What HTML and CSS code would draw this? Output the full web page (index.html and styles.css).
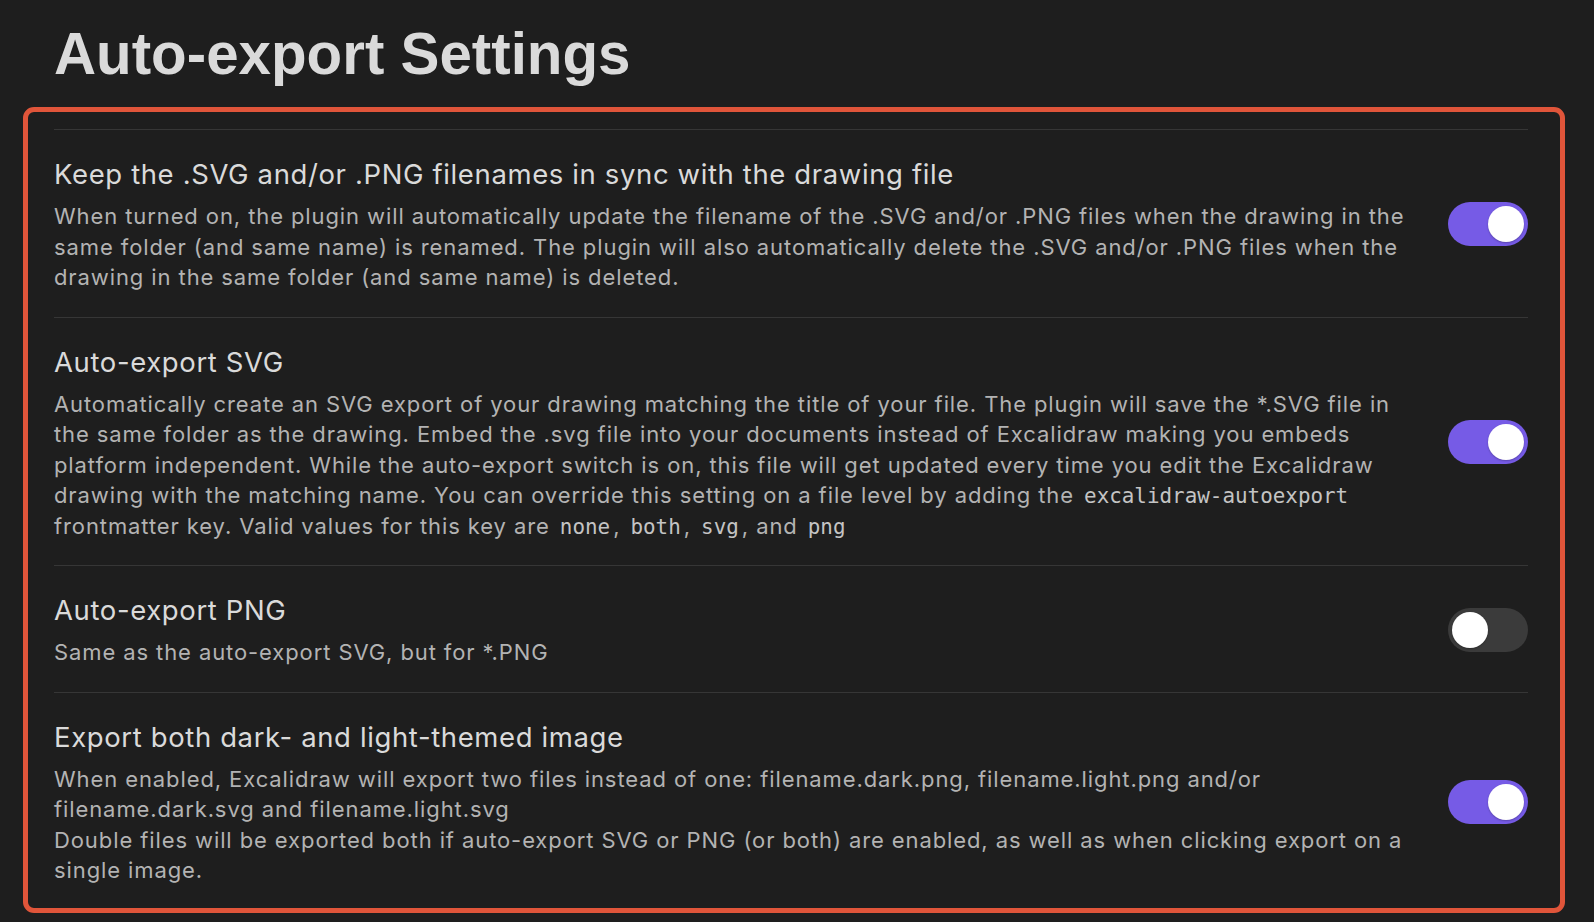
FILE: index.html
```html
<!DOCTYPE html>
<html lang="en">
<head>
<meta charset="utf-8">
<title>Auto-export Settings</title>
<link rel="stylesheet" href="styles.css">
</head>
<body>
<main class="page">
  <h1 class="page-title">Auto-export Settings</h1>
  <section class="settings">
    <div class="setting-item">
      <div class="setting-info">
        <div class="setting-name">Keep the .SVG and/or .PNG filenames in sync with the drawing file</div>
        <div class="setting-desc">When turned on, the plugin will automatically update the filename of the .SVG and/or .PNG files when the drawing in the same folder (and same name) is renamed. The plugin will also automatically delete the .SVG and/or .PNG files when the drawing in the same folder (and same name) is deleted.</div>
      </div>
      <div class="setting-control"><div class="toggle is-on"><span class="knob"></span></div></div>
    </div>
    <div class="setting-item">
      <div class="setting-info">
        <div class="setting-name">Auto-export SVG</div>
        <div class="setting-desc">Automatically create an SVG export of your drawing matching the title of your file. The plugin will save the *.SVG file in the same folder as the drawing. Embed the .svg file into your documents instead of Excalidraw making you embeds platform independent. While the auto-export switch is on, this file will get updated every time you edit the Excalidraw drawing with the matching name. You can override this setting on a file level by adding the <code>excalidraw-autoexport</code> frontmatter key. Valid values for this key are <code>none</code>, <code>both</code>, <code>svg</code>, and <code>png</code></div>
      </div>
      <div class="setting-control"><div class="toggle is-on"><span class="knob"></span></div></div>
    </div>
    <div class="setting-item">
      <div class="setting-info">
        <div class="setting-name">Auto-export PNG</div>
        <div class="setting-desc">Same as the auto-export SVG, but for *.PNG</div>
      </div>
      <div class="setting-control"><div class="toggle"><span class="knob"></span></div></div>
    </div>
    <div class="setting-item">
      <div class="setting-info">
        <div class="setting-name">Export both dark- and light-themed image</div>
        <div class="setting-desc">When enabled, Excalidraw will export two files instead of one: filename.dark.png, filename.light.png and/or filename.dark.svg and filename.light.svg<br>Double files will be exported both if auto-export SVG or PNG (or both) are enabled, as well as when clicking export on a single image.</div>
      </div>
      <div class="setting-control"><div class="toggle is-on"><span class="knob"></span></div></div>
    </div>
  </section>
  <div class="highlight"></div>
</main>
</body>
</html>
```

FILE: styles.css
```css
html, body {
  margin: 0;
  padding: 0;
  background: #1e1e1e;
}

body {
  font-family: Inter, "Noto Sans", sans-serif;
  color: #dadada;
}

.page {
  position: relative;
  min-height: 922px;
  box-sizing: border-box;
  padding: 19px 66px 0 54px;
  overflow: hidden;
}

.page-title {
  margin: 0 0 40px 0;
  font-family: "Liberation Sans", Arial, sans-serif;
  font-weight: bold;
  font-size: 58.3px;
  line-height: 70px;
  color: #dadada;
  letter-spacing: 0;
}

.settings {
  display: flex;
  flex-direction: column;
}

.setting-item {
  display: flex;
  align-items: center;
  border-top: 1px solid #363636;
  padding: 26px 0 24px 0;
}

.setting-info {
  flex: 1 1 auto;
  min-width: 0;
  margin-right: 34px;
}

.setting-name {
  font-size: 27.5px;
  line-height: 36px;
  letter-spacing: 0.62px;
  color: #dadada;
}

.setting-desc {
  padding-top: 9px;
  font-size: 22px;
  line-height: 30.5px;
  letter-spacing: 0.9px;
  color: #b3b3b3;
}

.setting-desc code {
  font-family: "DejaVu Sans Mono", "Liberation Mono", monospace;
  font-size: 20.9px;
  letter-spacing: 0;
  padding: 0 3px;
  line-height: 1;
  color: #c4c4c4;
}

.setting-control {
  flex: 0 0 auto;
  display: flex;
  justify-content: flex-end;
}

.toggle {
  width: 80px;
  height: 44px;
  box-sizing: border-box;
  padding: 4px;
  border-radius: 22px;
  background: #3b3b3b;
  display: flex;
  justify-content: flex-start;
}

.toggle.is-on {
  background: #765be6;
  justify-content: flex-end;
}

.knob {
  width: 36px;
  height: 36px;
  border-radius: 50%;
  background: #ffffff;
  box-shadow: 0 1px 2px rgba(0, 0, 0, 0.25);
}

.highlight {
  position: absolute;
  left: 23px;
  top: 107px;
  width: 1542px;
  height: 806px;
  box-sizing: border-box;
  border: 5px solid #e0553a;
  border-radius: 11px;
  pointer-events: none;
}
```
